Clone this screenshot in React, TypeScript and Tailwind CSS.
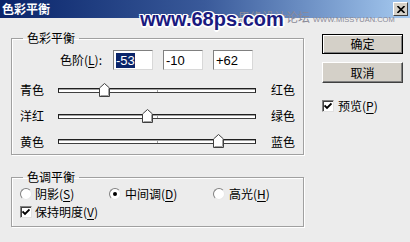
import React from 'react';

const Track = ({ value }: { value: number }) => {
  const pos = ((value + 100) / 200) * 198;
  return (
    <div className="relative w-[198px] h-[5px] border border-[#202020] border-b-[#404040] bg-white shadow-[inset_0_1px_0_#a0a0a0]">
      <div className="absolute left-[98px] top-0 w-px h-[3px] bg-[#a0a0a0]" />
      <svg
        className="absolute top-[-6px]"
        style={{ left: pos - 6.5 }}
        width="11"
        height="14"
        viewBox="0 0 11 14"
      >
        <path d="M0.5 13.5 V5 L5.5 0.5 L10.5 5 V13.5 Z" fill="#ffffff" stroke="#404040" />
        <path d="M1.5 12.5 V5.4 L5.5 1.8" fill="none" stroke="#ffffff" />
        <path d="M9.5 5.4 V12.5 H1.5" fill="none" stroke="#a0a0a0" />
      </svg>
    </div>
  );
};

const SliderRow = ({
  left,
  right,
  value,
  h,
}: {
  left: string;
  right: string;
  value: number;
  h: string;
}) => (
  <div className={`flex items-center ${h}`}>
    <span className="ml-[8px] w-[38px]">{left}</span>
    <Track value={value} />
    <span className="ml-[15px]">{right}</span>
  </div>
);

const Radio = ({ checked }: { checked?: boolean }) => (
  <span className="relative w-[12px] h-[12px] rounded-full bg-white border border-t-[#808080] border-l-[#808080] border-r-[#e8e8e8] border-b-[#e8e8e8] flex items-center justify-center">
    {checked && <span className="w-[4px] h-[4px] rounded-full bg-black" />}
  </span>
);

const Check = () => (
  <span className="w-[12px] h-[12px] bg-white border border-t-[#808080] border-l-[#808080] border-r-[#e0e0e0] border-b-[#e0e0e0] shadow-[inset_1px_1px_0_#404040] flex items-center justify-center">
    <svg width="8" height="8" viewBox="0 0 8 8">
      <path d="M0.5 3.5 L3 6 L7.5 1.5" fill="none" stroke="#000" strokeWidth="1.8" />
    </svg>
  </span>
);

const Ul = ({ children }: { children: React.ReactNode }) => (
  <span className="underline underline-offset-2">{children}</span>
);

const Field = ({
  inputs,
  selected,
}: {
  inputs: string[];
  selected?: number;
}) => (
  <div className="flex items-center h-[20px] mt-[4px]">
    <span className="ml-[48px] w-[53px]">
      色阶(<Ul>L</Ul>):
    </span>
    <div className="flex gap-[10px]">
      {inputs.map((v, i) => (
        <div
          key={i}
          className="w-[40px] h-[20px] bg-white border border-t-[#808080] border-l-[#808080] border-r-[#d8d8d8] border-b-[#d8d8d8] flex items-center pl-[2px] font-['Liberation_Sans',sans-serif] text-[13px]"
        >
          <span className={i === selected ? 'bg-[#0a246a] text-white leading-[15px]' : 'leading-[15px]'}>{v}</span>
        </div>
      ))}
    </div>
  </div>
);

export default function App() {
  return (
    <div className="relative w-[410px] h-[242px] overflow-hidden bg-[#ececec] text-[12px] text-black font-['Noto_Sans_CJK_SC',sans-serif]">
      <div className="h-[18px] flex items-center bg-linear-to-r from-[#0a246a] via-[#3a5a9a] to-[#a6caf0]">
        <span className="pl-[2px] text-white font-bold text-[12px] leading-[16px]">色彩平衡</span>
        <div className="ml-auto mr-[2px] w-[15px] h-[14px] bg-[#d4d0c8] border border-t-white border-l-white border-r-[#404040] border-b-[#404040] flex items-center justify-center">
          <svg width="8" height="7" viewBox="0 0 8 7">
            <path d="M0.5 0 L7.5 7 M7.5 0 L0.5 7" stroke="#000" strokeWidth="1.6" />
          </svg>
        </div>
      </div>

      <div className="absolute left-[238px] top-[10px] flex items-baseline gap-[3px] whitespace-nowrap text-[#8a8a98]">
        <span className="text-[12px] leading-[14px]">思缘设计论坛</span>
        <span className="font-['Liberation_Sans',sans-serif] text-[7.5px]">WWW.MISSYUAN.COM</span>
      </div>
      <div className="absolute left-[140px] top-[8px] whitespace-nowrap font-['Liberation_Sans',sans-serif] font-bold text-[20px] leading-[22px] text-[#1a1a80] [text-shadow:1px_1px_0_#fff,-1px_-1px_0_#fff,1px_-1px_0_#fff,-1px_1px_0_#fff,0_2px_0_#fff,2px_0_0_#fff]">
        www.68ps.com
      </div>

      <div className="flex pt-[12px] pl-[11px]">
        <div className="w-[293px]">
          <fieldset className="border border-[#a0a0a0] shadow-[inset_1px_1px_0_#fff,1px_1px_0_#fff]">
            <legend className="ml-[11px] px-[4px] leading-[16px]">色彩平衡</legend>
            <Field inputs={['-53', '-10', '+62']} selected={0} />
            <div className="mt-[7px]">
              <SliderRow left="青色" right="红色" value={-53} h="h-[26px]" />
              <SliderRow left="洋红" right="绿色" value={-10} h="h-[26px]" />
              <SliderRow left="黄色" right="蓝色" value={62} h="h-[25px]" />
            </div>
          </fieldset>

          <fieldset className="mt-[14px] border border-[#a0a0a0] shadow-[inset_1px_1px_0_#fff,1px_1px_0_#fff] pb-[5px]">
            <legend className="ml-[11px] px-[4px] leading-[16px]">色调平衡</legend>
            <div className="flex items-center h-[18px] pl-[8px]">
              <div className="w-[89px] flex items-center gap-[3px]">
                <Radio />
                <span>
                  阴影(<Ul>S</Ul>)
                </span>
              </div>
              <div className="w-[104px] flex items-center gap-[4px]">
                <Radio checked />
                <span>
                  中间调(<Ul>D</Ul>)
                </span>
              </div>
              <div className="flex items-center gap-[4px]">
                <Radio />
                <span>
                  高光(<Ul>H</Ul>)
                </span>
              </div>
            </div>
            <div className="flex items-center h-[18px] pl-[8px] gap-[3px]">
              <Check />
              <span>
                保持明度(<Ul>V</Ul>)
              </span>
            </div>
          </fieldset>
        </div>

        <div className="ml-[18px] mt-[4px] flex flex-col">
          <button className="w-[81px] h-[20px] bg-[#d4d0c8] border border-black shadow-[inset_1px_1px_0_#fff,inset_-1px_-1px_0_#808080] flex items-center justify-center leading-none">
            确定
          </button>
          <button className="mt-[8px] w-[81px] h-[21px] bg-[#d4d0c8] border border-t-white border-l-white border-r-[#404040] border-b-[#404040] shadow-[inset_-1px_-1px_0_#808080] flex items-center justify-center leading-none">
            取消
          </button>
          <div className="mt-[14px] flex items-center gap-[4px]">
            <Check />
            <span>
              预览(<Ul>P</Ul>)
            </span>
          </div>
        </div>
      </div>
    </div>
  );
}
